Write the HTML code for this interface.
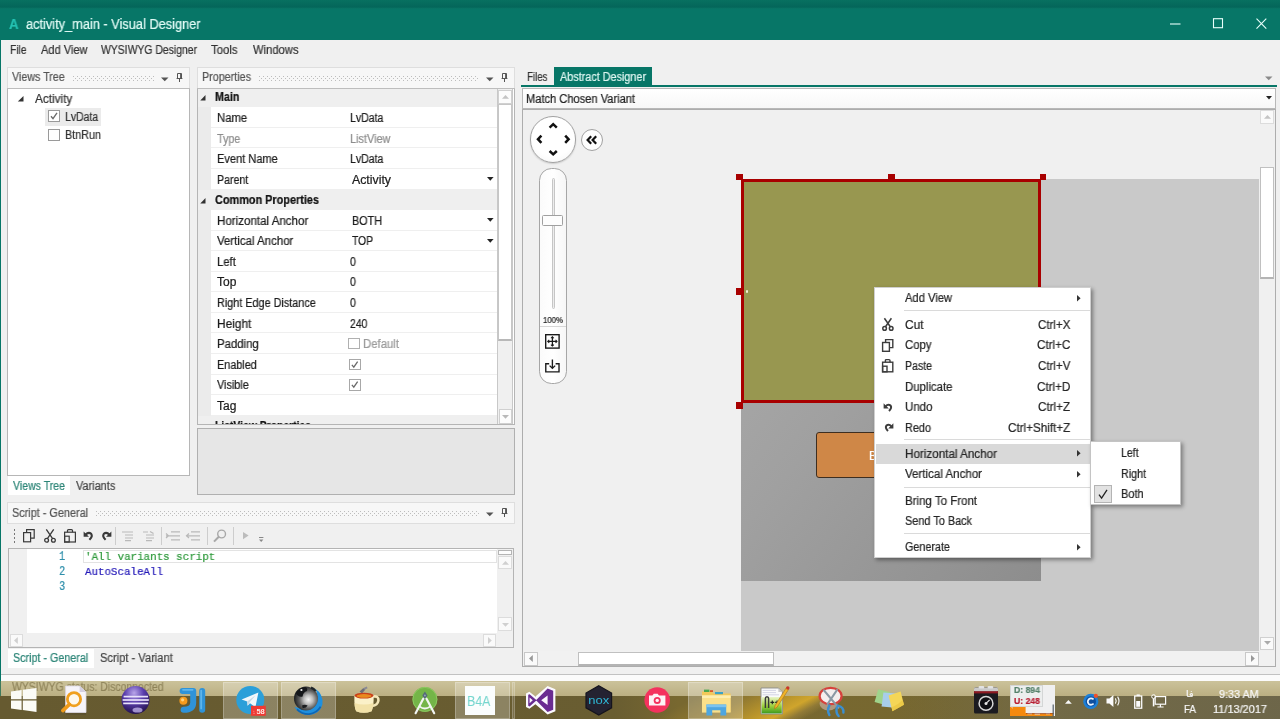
<!DOCTYPE html>
<html><head><meta charset="utf-8"><title>activity_main - Visual Designer</title>
<style>
*{box-sizing:border-box;margin:0;padding:0}
html,body{width:1280px;height:719px;overflow:hidden;background:#f0f0f0;font-family:"Liberation Sans",sans-serif;font-size:12px;color:#2a2a2a}
.abs{position:absolute}
#root{position:relative;width:1280px;height:719px;overflow:hidden;background:#f0f0f0}
.t{-webkit-text-stroke:0.22px;will-change:transform;position:absolute;white-space:nowrap;line-height:16px;height:16px;transform-origin:0 50%}
.grip{position:absolute;height:5px;background-image:radial-gradient(circle at 0.5px 0.5px,#bdbdbd 0.6px,transparent 0.8px),radial-gradient(circle at 2.5px 2.5px,#bdbdbd 0.6px,transparent 0.8px);background-size:4px 4px}
svg{overflow:visible}
.m{font-family:"Liberation Mono",monospace}

</style></head><body><div id="root">
<div class="abs" style="left:0px;top:0px;width:1280px;height:40px;background:#077667;"></div>
<div class="abs" style="left:0px;top:0px;width:1280px;height:9px;background:linear-gradient(#087060,#04665a 78%,#0a7868);"></div>
<div class="t" id="t1" style="left:9.00px;top:16.15px;font-size:14px;color:#25c2b3;font-weight:bold;transform:scaleX(0.9383);">A</div>
<div class="t" id="t2" style="left:25.50px;top:16.35px;font-size:14px;color:#e2fbf6;transform:scaleX(0.9129);">activity_main - Visual Designer</div>
<svg class="abs" style="left:1160px;top:10px;" width="120" height="28" viewBox="0 0 120 28"><g stroke="#e8fffb" stroke-width="1.1" fill="none"><path d="M10 14H20.5"/><rect x="53.5" y="8.7" width="9" height="9"/><path d="M96.5 8.7L106.3 18.7M106.3 8.7L96.5 18.7"/></g></svg>
<div class="abs" style="left:0px;top:40px;width:1px;height:656px;background:#077667;"></div>
<div class="t" id="t3" style="left:9.50px;top:42.14px;font-size:12px;color:#333;transform:scaleX(0.8530);">File</div>
<div class="t" id="t4" style="left:40.50px;top:42.14px;font-size:12px;color:#333;transform:scaleX(0.9211);">Add View</div>
<div class="t" id="t5" style="left:101.00px;top:42.14px;font-size:12px;color:#333;transform:scaleX(0.8672);">WYSIWYG Designer</div>
<div class="t" id="t6" style="left:211.00px;top:42.14px;font-size:12px;color:#333;transform:scaleX(0.9459);">Tools</div>
<div class="t" id="t7" style="left:252.50px;top:42.14px;font-size:12px;color:#333;transform:scaleX(0.9345);">Windows</div>
<div class="abs" style="left:7px;top:67px;width:183px;height:21px;background:#f7f7f7;border:1px solid #dedede;border-bottom:none;"></div>
<div class="abs" style="left:7px;top:88px;width:183px;height:1px;background:#bdbdbd;"></div>
<div class="t" id="t8" style="left:11.70px;top:69.44px;font-size:12px;color:#555;transform:scaleX(0.8911);">Views Tree</div>
<div class="grip" style="left:72.6px;top:75.5px;width:81.4px"></div>
<svg class="abs" style="left:161px;top:77px;" width="8" height="5" viewBox="0 0 8 5"><path d="M0 0.5H7.5L3.75 4.3Z" fill="#555"/></svg>
<svg class="abs" style="left:176px;top:73px;" width="8" height="10" viewBox="0 0 8 10"><g stroke="#555" fill="none" stroke-width="1"><path d="M1.5 0.5H5.5V5.5H1.5ZM4.6 0.5V5.5M0.6 5.5H6.4M3.5 5.5V9"/></g></svg>
<div class="abs" style="left:7px;top:89px;width:183px;height:387px;background:#fff;border:1px solid #b6b6b6;border-top:none;"></div>
<svg class="abs" style="left:16.5px;top:96px;" width="7" height="6" viewBox="0 0 7 6"><path d="M6.5 0V5.5H0.8Z" fill="#333"/></svg>
<div class="t" id="t9" style="left:34.70px;top:90.84px;font-size:12px;color:#333;transform:scaleX(0.9812);">Activity</div>
<div class="abs" style="left:45px;top:107.5px;width:56px;height:18px;background:#ebebeb;"></div>
<div class="abs" style="left:48px;top:110px;width:12px;height:12px;background:#fff;border:1px solid #9a9a9a;"></div>
<svg class="abs" style="left:48px;top:110px;" width="12" height="12" viewBox="0 0 12 12"><path d="M3 6.2L5 8.6L9 2.8" stroke="#6a6a6a" stroke-width="1.35" fill="none"/></svg>
<div class="t" id="t10" style="left:64.80px;top:108.64px;font-size:12px;color:#333;transform:scaleX(0.8730);">LvData</div>
<div class="abs" style="left:48px;top:128.5px;width:12px;height:12px;background:#fff;border:1px solid #9a9a9a;"></div>
<div class="t" id="t11" style="left:64.80px;top:127.04px;font-size:12px;color:#333;transform:scaleX(0.8993);">BtnRun</div>
<div class="abs" style="left:8px;top:476px;width:62px;height:19px;background:#fff;"></div>
<div class="t" id="t12" style="left:12.50px;top:477.64px;font-size:12px;color:#2c8577;transform:scaleX(0.8776);">Views Tree</div>
<div class="t" id="t13" style="left:76.00px;top:477.64px;font-size:12px;color:#444;transform:scaleX(0.9110);">Variants</div>
<div class="abs" style="left:197px;top:67px;width:318px;height:21px;background:#f7f7f7;border:1px solid #dedede;border-bottom:none;"></div>
<div class="abs" style="left:197px;top:88px;width:318px;height:1px;background:#bdbdbd;"></div>
<div class="t" id="t14" style="left:201.70px;top:69.44px;font-size:12px;color:#555;transform:scaleX(0.8957);">Properties</div>
<div class="grip" style="left:258.8px;top:75.5px;width:220.2px"></div>
<svg class="abs" style="left:486px;top:77px;" width="8" height="5" viewBox="0 0 8 5"><path d="M0 0.5H7.5L3.75 4.3Z" fill="#555"/></svg>
<svg class="abs" style="left:501px;top:73px;" width="8" height="10" viewBox="0 0 8 10"><g stroke="#555" fill="none" stroke-width="1"><path d="M1.5 0.5H5.5V5.5H1.5ZM4.6 0.5V5.5M0.6 5.5H6.4M3.5 5.5V9"/></g></svg>
<div class="abs" style="left:197px;top:89px;width:318px;height:336px;background:#fff;border:1px solid #b5b5b5;border-top:none;"></div>
<div class="abs" style="left:198px;top:89px;width:13px;height:335px;background:#ebebeb;"></div>
<div class="abs" style="left:198px;top:89px;width:299px;height:18.26px;background:#efefef;"></div>
<svg class="abs" style="left:200.3px;top:95.3px;" width="6" height="6" viewBox="0 0 6 6"><path d="M5.5 0V5.5H0.3Z" fill="#333"/></svg>
<div class="t" id="t15" style="left:215.00px;top:89.44px;font-size:12px;color:#111;font-weight:bold;clip-path:inset(0 0 0px 0);transform:scaleX(0.8923);">Main</div>
<div class="abs" style="left:211px;top:126.82px;width:286px;height:1px;background:#efefef;"></div>
<div class="t" id="t16" style="left:217.20px;top:110.00px;font-size:12px;color:#1c1c1c;transform:scaleX(0.9433);">Name</div>
<div class="t" id="t17" style="left:349.60px;top:110.00px;font-size:12px;color:#1c1c1c;transform:scaleX(0.8782);">LvData</div>
<div class="abs" style="left:211px;top:147.38px;width:286px;height:1px;background:#efefef;"></div>
<div class="t" id="t18" style="left:217.20px;top:130.56px;font-size:12px;color:#8e8e8e;transform:scaleX(0.8956);">Type</div>
<div class="t" id="t19" style="left:349.60px;top:130.56px;font-size:12px;color:#8e8e8e;transform:scaleX(0.9085);">ListView</div>
<div class="abs" style="left:211px;top:167.94px;width:286px;height:1px;background:#efefef;"></div>
<div class="t" id="t20" style="left:217.20px;top:151.12px;font-size:12px;color:#1c1c1c;transform:scaleX(0.9208);">Event Name</div>
<div class="t" id="t21" style="left:349.60px;top:151.12px;font-size:12px;color:#1c1c1c;transform:scaleX(0.8782);">LvData</div>
<div class="abs" style="left:211px;top:188.5px;width:286px;height:1px;background:#efefef;"></div>
<div class="t" id="t22" style="left:217.20px;top:171.68px;font-size:12px;color:#1c1c1c;transform:scaleX(0.8852);">Parent</div>
<div class="t" id="t23" style="left:351.50px;top:171.68px;font-size:12px;color:#1c1c1c;transform:scaleX(1.0259);">Activity</div>
<svg class="abs" style="left:486.5px;top:177.24px;" width="7" height="4" viewBox="0 0 7 4"><path d="M0 0H6.6L3.3 3.8Z" fill="#222"/></svg>
<div class="abs" style="left:198px;top:189.5px;width:299px;height:20.56px;background:#efefef;"></div>
<svg class="abs" style="left:200.3px;top:198.1px;" width="6" height="6" viewBox="0 0 6 6"><path d="M5.5 0V5.5H0.3Z" fill="#333"/></svg>
<div class="t" id="t24" style="left:215.00px;top:192.24px;font-size:12px;color:#111;font-weight:bold;clip-path:inset(0 0 0px 0);transform:scaleX(0.9068);">Common Properties</div>
<div class="abs" style="left:211px;top:229.62px;width:286px;height:1px;background:#efefef;"></div>
<div class="t" id="t25" style="left:217.20px;top:212.80px;font-size:12px;color:#1c1c1c;transform:scaleX(0.9639);">Horizontal Anchor</div>
<div class="t" id="t26" style="left:351.50px;top:212.80px;font-size:12px;color:#1c1c1c;transform:scaleX(0.8997);">BOTH</div>
<svg class="abs" style="left:486.5px;top:218.36px;" width="7" height="4" viewBox="0 0 7 4"><path d="M0 0H6.6L3.3 3.8Z" fill="#222"/></svg>
<div class="abs" style="left:211px;top:250.18px;width:286px;height:1px;background:#efefef;"></div>
<div class="t" id="t27" style="left:217.20px;top:233.36px;font-size:12px;color:#1c1c1c;transform:scaleX(0.9532);">Vertical Anchor</div>
<div class="t" id="t28" style="left:351.50px;top:233.36px;font-size:12px;color:#1c1c1c;transform:scaleX(0.8588);">TOP</div>
<svg class="abs" style="left:486.5px;top:238.92px;" width="7" height="4" viewBox="0 0 7 4"><path d="M0 0H6.6L3.3 3.8Z" fill="#222"/></svg>
<div class="abs" style="left:211px;top:270.74px;width:286px;height:1px;background:#efefef;"></div>
<div class="t" id="t29" style="left:217.20px;top:253.92px;font-size:12px;color:#1c1c1c;transform:scaleX(0.9393);">Left</div>
<div class="t" id="t30" style="left:349.60px;top:253.92px;font-size:12px;color:#1c1c1c;transform:scaleX(0.8822);">0</div>
<div class="abs" style="left:211px;top:291.3px;width:286px;height:1px;background:#efefef;"></div>
<div class="t" id="t31" style="left:217.20px;top:274.48px;font-size:12px;color:#1c1c1c;transform:scaleX(0.9969);">Top</div>
<div class="t" id="t32" style="left:349.60px;top:274.48px;font-size:12px;color:#1c1c1c;transform:scaleX(0.8822);">0</div>
<div class="abs" style="left:211px;top:311.86px;width:286px;height:1px;background:#efefef;"></div>
<div class="t" id="t33" style="left:217.20px;top:295.04px;font-size:12px;color:#1c1c1c;transform:scaleX(0.9031);">Right Edge Distance</div>
<div class="t" id="t34" style="left:349.60px;top:295.04px;font-size:12px;color:#1c1c1c;transform:scaleX(0.8822);">0</div>
<div class="abs" style="left:211px;top:332.42px;width:286px;height:1px;background:#efefef;"></div>
<div class="t" id="t35" style="left:217.20px;top:315.60px;font-size:12px;color:#1c1c1c;transform:scaleX(0.9888);">Height</div>
<div class="t" id="t36" style="left:349.60px;top:315.60px;font-size:12px;color:#1c1c1c;transform:scaleX(0.8686);">240</div>
<div class="abs" style="left:211px;top:352.98px;width:286px;height:1px;background:#efefef;"></div>
<div class="t" id="t37" style="left:217.20px;top:336.16px;font-size:12px;color:#1c1c1c;transform:scaleX(0.9490);">Padding</div>
<div class="abs" style="left:348px;top:337.92px;width:11.5px;height:11.5px;background:#fff;border:1px solid #b0b0b0;"></div>
<div class="t" id="t38" style="left:362.50px;top:336.16px;font-size:12px;color:#9a9a9a;transform:scaleX(0.9466);">Default</div>
<div class="abs" style="left:211px;top:373.54px;width:286px;height:1px;background:#efefef;"></div>
<div class="t" id="t39" style="left:217.20px;top:356.72px;font-size:12px;color:#1c1c1c;transform:scaleX(0.9036);">Enabled</div>
<div class="abs" style="left:349px;top:358.78px;width:11.5px;height:11.5px;background:#fff;border:1px solid #a8a8a8;"></div>
<svg class="abs" style="left:349px;top:358.78px;" width="11.5" height="11.5" viewBox="0 0 12 12"><path d="M3 6.2L5 8.6L9 2.8" stroke="#6a6a6a" stroke-width="1.35" fill="none"/></svg>
<div class="abs" style="left:211px;top:394.1px;width:286px;height:1px;background:#efefef;"></div>
<div class="t" id="t40" style="left:217.20px;top:377.28px;font-size:12px;color:#1c1c1c;transform:scaleX(0.9049);">Visible</div>
<div class="abs" style="left:349px;top:379.34px;width:11.5px;height:11.5px;background:#fff;border:1px solid #a8a8a8;"></div>
<svg class="abs" style="left:349px;top:379.34px;" width="11.5" height="11.5" viewBox="0 0 12 12"><path d="M3 6.2L5 8.6L9 2.8" stroke="#6a6a6a" stroke-width="1.35" fill="none"/></svg>
<div class="abs" style="left:211px;top:414.66px;width:286px;height:1px;background:#efefef;"></div>
<div class="t" id="t41" style="left:217.20px;top:397.84px;font-size:12px;color:#1c1c1c;transform:scaleX(0.9969);">Tag</div>
<div class="abs" style="left:198px;top:415.66px;width:299px;height:20.56px;background:#efefef;"></div>
<svg class="abs" style="left:202px;top:423.66px;" width="5" height="8" viewBox="0 0 5 8"><path d="M0.5 0.5L4 4L0.5 7.5Z" fill="none" stroke="#555" stroke-width="0.9"/></svg>
<div class="t" id="t42" style="left:215.00px;top:418.40px;font-size:12px;color:#111;font-weight:bold;clip-path:inset(0 0 9.9px 0);transform:scaleX(0.8636);">ListView Properties</div>
<div class="abs" style="left:497px;top:88.5px;width:16px;height:336px;background:#f0f0f0;border:1px solid #c8c8c8;border-top:none;border-bottom:none;"></div>
<div class="abs" style="left:498px;top:90px;width:14px;height:13.5px;background:#fcfcfc;border:1px solid #d0d0d0;"></div>
<svg class="abs" style="left:501.5px;top:94.5px;" width="7" height="4" viewBox="0 0 7 4"><path d="M0 3.8H7L3.5 0Z" fill="#c4c4c4"/></svg>
<div class="abs" style="left:498px;top:104px;width:14px;height:236.5px;background:#fff;border:1px solid #c6c6c6;border-bottom:2px solid #b8b8b8;"></div>
<div class="abs" style="left:499px;top:409px;width:13px;height:14.5px;background:#fcfcfc;border:1px solid #d0d0d0;"></div>
<svg class="abs" style="left:502px;top:414.5px;" width="7" height="4" viewBox="0 0 7 4"><path d="M0 0H7L3.5 3.8Z" fill="#b8b8b8"/></svg>
<div class="abs" style="left:197px;top:424.2px;width:318px;height:4.5px;background:#f0f0f0;border-top:1px solid #b5b5b5;"></div>
<div class="abs" style="left:197px;top:428px;width:318px;height:67px;background:#e6e6e6;border:1px solid #b0b0b0;"></div>
<div class="abs" style="left:7px;top:502px;width:508px;height:21px;background:#f7f7f7;border:1px solid #dedede;border-bottom:none;"></div>
<div class="abs" style="left:7px;top:523px;width:508px;height:1px;background:#dedede;"></div>
<div class="t" id="t43" style="left:11.70px;top:505.34px;font-size:12px;color:#555;transform:scaleX(0.9056);">Script - General</div>
<div class="grip" style="left:96px;top:510.5px;width:383px"></div>
<svg class="abs" style="left:486px;top:512px;" width="8" height="5" viewBox="0 0 8 5"><path d="M0 0.5H7.5L3.75 4.3Z" fill="#555"/></svg>
<svg class="abs" style="left:501px;top:508px;" width="8" height="10" viewBox="0 0 8 10"><g stroke="#555" fill="none" stroke-width="1"><path d="M1.5 0.5H5.5V5.5H1.5ZM4.6 0.5V5.5M0.6 5.5H6.4M3.5 5.5V9"/></g></svg>
<div class="abs" style="left:13.5px;top:529px;width:1.5px;height:1.5px;background:#777;"></div>
<div class="abs" style="left:13.5px;top:533px;width:1.5px;height:1.5px;background:#777;"></div>
<div class="abs" style="left:13.5px;top:537px;width:1.5px;height:1.5px;background:#777;"></div>
<div class="abs" style="left:13.5px;top:541px;width:1.5px;height:1.5px;background:#777;"></div>
<svg class="abs" style="left:23px;top:528.5px;" width="12" height="14" viewBox="0 0 12 14"><g fill="none" stroke="#3a3a3a" stroke-width="1.2"><path d="M3.6 3.5V0.6H11.2V9.2H7.6"/><rect x="0.6" y="3.6" width="7" height="9.2" fill="#f0f0f0"/></g></svg>
<svg class="abs" style="left:43.5px;top:528.5px;" width="12" height="14" viewBox="0 0 12 14"><g fill="none" stroke="#3a3a3a" stroke-width="1.3"><path d="M2.3 0.3L8.6 9.6M9.7 0.3L3.4 9.6"/><circle cx="2.6" cy="11.2" r="1.9"/><circle cx="9.4" cy="11.2" r="1.9"/></g></svg>
<svg class="abs" style="left:63.5px;top:528.5px;" width="12" height="14" viewBox="0 0 12 14"><g fill="none" stroke="#3a3a3a" stroke-width="1.2"><path d="M3.5 3.2V1.6Q3.5 0.6 4.5 0.6H7.5Q8.5 0.6 8.5 1.6V3.2"/><rect x="0.6" y="3.2" width="10.8" height="9.8"/><rect x="0.6" y="7.2" width="4.6" height="5.8"/></g></svg>
<svg class="abs" style="left:84px;top:531px;" width="10" height="10" viewBox="0 0 10 10"><g fill="none" stroke="#3a3a3a" stroke-width="2.1"><path d="M1.4 3.8Q4.5 0.6 7.2 2.8Q9 5.2 5.4 8.8"/></g><path d="M-0.4 0.4V5.8H5Z" fill="#3a3a3a"/></svg>
<svg class="abs" style="left:101px;top:531px;" width="10" height="10" viewBox="0 0 10 10"><g transform="translate(10,0) scale(-1,1)"><g fill="none" stroke="#3a3a3a" stroke-width="2.1"><path d="M1.4 3.8Q4.5 0.6 7.2 2.8Q9 5.2 5.4 8.8"/></g><path d="M-0.4 0.4V5.8H5Z" fill="#3a3a3a"/></g></svg>
<div class="abs" style="left:114.5px;top:526.5px;width:1px;height:18px;background:#cdcdcd;"></div>
<svg class="abs" style="left:122px;top:531px;" width="12" height="10" viewBox="0 0 12 10"><g stroke="#b9b9b9" stroke-width="1.2"><path d="M0 1H11M3 4H11M3 7H11M3 9.6H9"/></g></svg>
<svg class="abs" style="left:143px;top:531px;" width="12" height="10" viewBox="0 0 12 10"><g stroke="#b9b9b9" stroke-width="1.2"><path d="M0 1H5M3 4H11M3 7H11M3 9.6H9"/><path d="M7 0.5L10.5 2.5" /></g></svg>
<div class="abs" style="left:160.5px;top:526.5px;width:1px;height:18px;background:#cdcdcd;"></div>
<svg class="abs" style="left:166px;top:531px;" width="15" height="10" viewBox="0 0 15 10"><g stroke="#b9b9b9" stroke-width="1.2" fill="none"><path d="M5 0.8H14M0 4.8H14M5 8.8H14M0 2.5L2.5 4.8L0 7"/></g></svg>
<svg class="abs" style="left:186px;top:531px;" width="15" height="10" viewBox="0 0 15 10"><g stroke="#b9b9b9" stroke-width="1.2" fill="none"><path d="M5 0.8H14M0 4.8H14M5 8.8H14M3 2.5L0.5 4.8L3 7"/></g></svg>
<div class="abs" style="left:207px;top:526.5px;width:1px;height:18px;background:#cdcdcd;"></div>
<svg class="abs" style="left:213px;top:529px;" width="14" height="14" viewBox="0 0 14 14"><g stroke="#a8a8a8" fill="none"><circle cx="8.6" cy="5" r="3.9" stroke-width="1.4"/><path d="M5.8 7.8L1 12.6" stroke-width="2"/></g></svg>
<div class="abs" style="left:232.5px;top:526.5px;width:1px;height:18px;background:#cdcdcd;"></div>
<svg class="abs" style="left:242.5px;top:532px;" width="6" height="8" viewBox="0 0 6 8"><path d="M0 0L5.6 3.6L0 7.2Z" fill="#bcbcbc"/></svg>
<svg class="abs" style="left:259px;top:537px;" width="5" height="6" viewBox="0 0 5 6"><path d="M0 0.5H4.4" stroke="#888" stroke-width="1"/><path d="M0 2.6H4.4L2.2 5Z" fill="#888"/></svg>
<div class="abs" style="left:8px;top:548px;width:506px;height:100px;background:#fff;border:1px solid #b4b4b4;"></div>
<div class="abs" style="left:9px;top:549px;width:17.5px;height:84px;background:#f0f0f0;"></div>
<div class="abs" style="left:9px;top:632.5px;width:504px;height:14.5px;background:#f0f0f0;"></div>
<div class="abs" style="left:497px;top:549px;width:16px;height:84px;background:#f0f0f0;"></div>
<div class="abs" style="left:83px;top:549.8px;width:414px;height:13.4px;border:1px solid #e3e3e3;"></div>
<div class="t m" id="t44" style="left:58.60px;top:548.87px;font-size:12.5px;color:#2f8fab;transform:scaleX(0.8249);">1</div>
<div class="t m" id="t45" style="left:58.60px;top:563.67px;font-size:12.5px;color:#2f8fab;transform:scaleX(0.8249);">2</div>
<div class="t m" id="t46" style="left:58.60px;top:578.67px;font-size:12.5px;color:#2f8fab;transform:scaleX(0.8249);">3</div>
<div class="t m" id="t47" style="left:84.70px;top:548.74px;font-size:11.5px;color:#2f9a3c;transform:scaleX(0.9440);">'All variants script</div>
<div class="t m" id="t48" style="left:84.70px;top:563.54px;font-size:11.5px;color:#2318b8;transform:scaleX(0.9417);">AutoScaleAll</div>
<div class="abs" style="left:498px;top:549.5px;width:14px;height:5px;background:#fdfdfd;border:1px solid #b5b5b5;"></div>
<div class="abs" style="left:498px;top:556px;width:14px;height:13px;background:#fafafa;border:1px solid #dcdcdc;"></div>
<svg class="abs" style="left:501.5px;top:560.5px;" width="7" height="4" viewBox="0 0 7 4"><path d="M0 3.8H7L3.5 0Z" fill="#d0d0d0"/></svg>
<div class="abs" style="left:498px;top:617px;width:14px;height:14px;background:#fafafa;border:1px solid #dcdcdc;"></div>
<svg class="abs" style="left:501.5px;top:622.5px;" width="7" height="4" viewBox="0 0 7 4"><path d="M0 0H7L3.5 3.8Z" fill="#d0d0d0"/></svg>
<div class="abs" style="left:9.5px;top:633.5px;width:13px;height:13px;background:#fafafa;border:1px solid #dcdcdc;"></div>
<svg class="abs" style="left:14px;top:636.5px;" width="4" height="7" viewBox="0 0 4 7"><path d="M3.8 0V7L0 3.5Z" fill="#d0d0d0"/></svg>
<div class="abs" style="left:482.5px;top:633.5px;width:13px;height:13px;background:#fafafa;border:1px solid #dcdcdc;"></div>
<svg class="abs" style="left:487.5px;top:636.5px;" width="4" height="7" viewBox="0 0 4 7"><path d="M0 0V7L3.8 3.5Z" fill="#d0d0d0"/></svg>
<div class="abs" style="left:8px;top:648.5px;width:85.5px;height:19px;background:#fff;"></div>
<div class="t" id="t49" style="left:12.50px;top:649.64px;font-size:12px;color:#2c8577;transform:scaleX(0.8949);">Script - General</div>
<div class="t" id="t50" style="left:99.70px;top:649.64px;font-size:12px;color:#444;transform:scaleX(0.9265);">Script - Variant</div>
<div class="t" id="t51" style="left:527.00px;top:68.94px;font-size:12px;color:#333;transform:scaleX(0.8089);">Files</div>
<div class="abs" style="left:553.8px;top:66.5px;width:98px;height:19px;background:#077667;"></div>
<div class="t" id="t52" style="left:560.00px;top:68.94px;font-size:12px;color:#dff7f2;transform:scaleX(0.9017);">Abstract Designer</div>
<div class="abs" style="left:521px;top:85px;width:756px;height:2px;background:#077667;"></div>
<svg class="abs" style="left:1265px;top:75.5px;" width="8" height="5" viewBox="0 0 8 5"><path d="M0 0.5H7.5L3.75 4.3Z" fill="#8a8a8a"/></svg>
<div class="abs" style="left:521.5px;top:88px;width:754.8px;height:20.5px;background:linear-gradient(#ffffff,#f7f7f7);border:1px solid #b8b8b8;"></div>
<div class="t" id="t53" style="left:526.00px;top:90.54px;font-size:12px;color:#222;transform:scaleX(0.9250);">Match Chosen Variant</div>
<svg class="abs" style="left:1266.3px;top:96px;" width="6" height="4" viewBox="0 0 6 4"><path d="M0 0H6L3 3.4Z" fill="#222"/></svg>
<div class="abs" style="left:521.5px;top:108.5px;width:754.8px;height:558.8px;background:#f0f0f0;border:1px solid #adadad;"></div>
<div class="abs" style="left:741px;top:179px;width:518px;height:471.5px;background:#c9c9c9;"></div>
<div class="abs" style="left:741px;top:179px;width:300px;height:402px;background:linear-gradient(128deg,#adadad 0%,#a0a0a0 45%,#8d8d8d 100%);"></div>
<div class="abs" style="left:816px;top:431.5px;width:150px;height:46.5px;background:#cf8747;border:1.3px solid #3e2e20;border-radius:3px;"></div>
<div class="t" id="t54" style="left:868.70px;top:448.34px;font-size:12px;color:#fff;">BtnRun</div>
<div class="abs" style="left:741px;top:179px;width:300px;height:223.5px;background:#989750;border:3px solid #a80000;"></div>
<div class="abs" style="left:736px;top:173.6px;width:6.8px;height:6.8px;background:#a80000;"></div>
<div class="abs" style="left:887.8px;top:173.6px;width:6.8px;height:6.8px;background:#a80000;"></div>
<div class="abs" style="left:1039.7px;top:173.6px;width:6.8px;height:6.8px;background:#a80000;"></div>
<div class="abs" style="left:736px;top:288px;width:6.8px;height:6.8px;background:#a80000;"></div>
<div class="abs" style="left:736px;top:401.8px;width:6.8px;height:6.8px;background:#a80000;"></div>
<div class="abs" style="left:745.5px;top:290px;width:2.5px;height:2.5px;background:#f4f0d8;border-radius:50%;"></div>
<div class="abs" style="left:1259px;top:109.5px;width:16.3px;height:541px;background:#f0f0f0;"></div>
<div class="abs" style="left:1260.3px;top:110px;width:14px;height:13.5px;background:#fafafa;border:1px solid #dcdcdc;"></div>
<svg class="abs" style="left:1263.8px;top:114.8px;" width="7" height="4" viewBox="0 0 7 4"><path d="M0 3.8H7L3.5 0Z" fill="#c4c4c4"/></svg>
<div class="abs" style="left:1260.3px;top:167.3px;width:14px;height:112px;background:#fff;border:1px solid #c0c0c0;border-bottom:2px solid #b4b4b4;"></div>
<div class="abs" style="left:1260.3px;top:636.5px;width:14px;height:13.5px;background:#fafafa;border:1px solid #d0d0d0;"></div>
<svg class="abs" style="left:1263.8px;top:641.3px;" width="7" height="4" viewBox="0 0 7 4"><path d="M0 0H7L3.5 3.8Z" fill="#aaa"/></svg>
<div class="abs" style="left:522.5px;top:650.5px;width:752.8px;height:15.8px;background:#f1f1f1;"></div>
<div class="abs" style="left:524px;top:652px;width:14px;height:13.5px;background:#fafafa;border:1px solid #c8c8c8;"></div>
<svg class="abs" style="left:529px;top:655.3px;" width="4" height="7" viewBox="0 0 4 7"><path d="M3.8 0V7L0 3.5Z" fill="#999"/></svg>
<div class="abs" style="left:578px;top:652px;width:195.5px;height:13.5px;background:#fff;border:1px solid #c0c0c0;border-bottom:2px solid #b4b4b4;"></div>
<div class="abs" style="left:1245px;top:652px;width:14px;height:13.5px;background:#fafafa;border:1px solid #c8c8c8;"></div>
<svg class="abs" style="left:1250.5px;top:655.3px;" width="4" height="7" viewBox="0 0 4 7"><path d="M0 0V7L3.8 3.5Z" fill="#999"/></svg>
<div class="abs" style="left:529.5px;top:116px;width:46.5px;height:46.5px;background:radial-gradient(circle at 50% 40%,#ffffff 60%,#f2f2f2);border:1.7px solid #a2a2a2;border-radius:50%;box-shadow:0 1px 1.5px rgba(0,0,0,.15);"></div>
<svg class="abs" style="left:529.5px;top:116px;" width="46.5" height="46.5" viewBox="0 0 46.5 46.5"><g fill="none" stroke="#111" stroke-width="2.5" stroke-linecap="butt"><path d="M19.6 11.6L23.2 8.2L26.8 11.6"/><path d="M19.6 35L23.2 38.4L26.8 35"/><path d="M11.4 19.6L8 23.2L11.4 26.8"/><path d="M35.2 19.6L38.6 23.2L35.2 26.8"/></g></svg>
<div class="abs" style="left:581px;top:129px;width:22px;height:22px;background:#fdfdfd;border:1.6px solid #a2a2a2;border-radius:50%;"></div>
<svg class="abs" style="left:581px;top:129px;" width="22" height="22" viewBox="0 0 22 22"><g fill="none" stroke="#111" stroke-width="2.2"><path d="M10.2 7.2L6.6 11L10.2 14.8"/><path d="M15.2 7.2L11.6 11L15.2 14.8"/></g></svg>
<div class="abs" style="left:539px;top:167.5px;width:28px;height:216.5px;background:linear-gradient(90deg,#fbfbfb,#ffffff 50%,#f6f6f6);border:1.2px solid #a6a6a6;border-radius:12.5px;"></div>
<div class="abs" style="left:551.5px;top:178px;width:3.5px;height:130.5px;background:#ededed;border:1px solid #c6c6c6;border-radius:2px;"></div>
<div class="abs" style="left:542px;top:215.4px;width:21px;height:10.6px;background:#fdfdfd;border:1px solid #a0a0a0;border-radius:1.5px;"></div>
<div class="t" id="t55" style="left:542.70px;top:312.08px;font-size:9px;color:#222;transform:scaleX(0.8684);">100%</div>
<div class="abs" style="left:540px;top:325.5px;width:26px;height:1px;background:#d6d6d6;"></div>
<svg class="abs" style="left:545px;top:334.3px;" width="14.8" height="14.8" viewBox="0 0 16 16"><g fill="none" stroke="#1a1a1a"><rect x="0.75" y="0.75" width="14.5" height="14.5" stroke-width="1.5"/><path d="M8 3V13M3 8H13" stroke-width="1.4"/><path d="M6.4 4.6L8 3L9.6 4.6M6.4 11.4L8 13L9.6 11.4M4.6 6.4L3 8L4.6 9.6M11.4 6.4L13 8L11.4 9.6" stroke-width="1.1"/></g></svg>
<svg class="abs" style="left:545px;top:359.3px;" width="14.8" height="13.8" viewBox="0 0 16 15"><g fill="none" stroke="#1a1a1a" stroke-width="1.5"><path d="M4.5 5.2H0.8V14H15.2V5.2H11.5"/><path d="M8 0.5V10M5 7.2L8 10.2L11 7.2"/></g></svg>
<div class="abs" style="left:873.8px;top:286.5px;width:217.7px;height:271.5px;background:#fff;border:1px solid #cfcfcf;box-shadow:2px 2px 4px rgba(0,0,0,.4);"></div>
<div class="abs" style="left:875.5px;top:443.5px;width:215px;height:20px;background:#d9d9d9;"></div>
<div class="t" id="t56" style="left:905.00px;top:290.34px;font-size:12px;color:#262626;transform:scaleX(0.9310);">Add View</div>
<svg class="abs" style="left:1077.3px;top:295px;" width="4" height="7" viewBox="0 0 4 7"><path d="M0 0V6.4L3.6 3.2Z" fill="#333"/></svg>
<div class="t" id="t57" style="left:905.00px;top:316.54px;font-size:12px;color:#262626;transform:scaleX(0.9900);">Cut</div>
<div class="t" id="t58" style="left:1037.50px;top:316.54px;font-size:12px;color:#262626;transform:scaleX(0.9588);">Ctrl+X</div>
<div class="t" id="t59" style="left:905.00px;top:337.14px;font-size:12px;color:#262626;transform:scaleX(0.9459);">Copy</div>
<div class="t" id="t60" style="left:1036.50px;top:337.14px;font-size:12px;color:#262626;transform:scaleX(0.9696);">Ctrl+C</div>
<div class="t" id="t61" style="left:905.00px;top:357.94px;font-size:12px;color:#262626;transform:scaleX(0.8798);">Paste</div>
<div class="t" id="t62" style="left:1037.50px;top:357.94px;font-size:12px;color:#262626;transform:scaleX(0.9588);">Ctrl+V</div>
<div class="t" id="t63" style="left:905.00px;top:378.64px;font-size:12px;color:#262626;transform:scaleX(0.9494);">Duplicate</div>
<div class="t" id="t64" style="left:1036.50px;top:378.64px;font-size:12px;color:#262626;transform:scaleX(0.9696);">Ctrl+D</div>
<div class="t" id="t65" style="left:905.00px;top:399.14px;font-size:12px;color:#262626;transform:scaleX(0.9586);">Undo</div>
<div class="t" id="t66" style="left:1037.80px;top:399.14px;font-size:12px;color:#262626;transform:scaleX(0.9697);">Ctrl+Z</div>
<div class="t" id="t67" style="left:905.00px;top:419.74px;font-size:12px;color:#262626;transform:scaleX(0.9063);">Redo</div>
<div class="t" id="t68" style="left:1007.60px;top:419.74px;font-size:12px;color:#262626;transform:scaleX(0.9714);">Ctrl+Shift+Z</div>
<div class="t" id="t69" style="left:905.00px;top:445.74px;font-size:12px;color:#262626;transform:scaleX(0.9713);">Horizontal Anchor</div>
<svg class="abs" style="left:1077.3px;top:450.4px;" width="4" height="7" viewBox="0 0 4 7"><path d="M0 0V6.4L3.6 3.2Z" fill="#333"/></svg>
<div class="t" id="t70" style="left:905.00px;top:466.44px;font-size:12px;color:#262626;transform:scaleX(0.9619);">Vertical Anchor</div>
<svg class="abs" style="left:1077.3px;top:471.1px;" width="4" height="7" viewBox="0 0 4 7"><path d="M0 0V6.4L3.6 3.2Z" fill="#333"/></svg>
<div class="t" id="t71" style="left:905.00px;top:492.74px;font-size:12px;color:#262626;transform:scaleX(0.9580);">Bring To Front</div>
<div class="t" id="t72" style="left:905.00px;top:513.34px;font-size:12px;color:#262626;transform:scaleX(0.9075);">Send To Back</div>
<div class="t" id="t73" style="left:905.00px;top:539.34px;font-size:12px;color:#262626;transform:scaleX(0.8992);">Generate</div>
<svg class="abs" style="left:1077.3px;top:544px;" width="4" height="7" viewBox="0 0 4 7"><path d="M0 0V6.4L3.6 3.2Z" fill="#333"/></svg>
<div class="abs" style="left:903.8px;top:310.2px;width:186.7px;height:1px;background:#dadada;"></div>
<div class="abs" style="left:903.8px;top:439px;width:186.7px;height:1px;background:#dadada;"></div>
<div class="abs" style="left:903.8px;top:486.6px;width:186.7px;height:1px;background:#dadada;"></div>
<div class="abs" style="left:903.8px;top:533px;width:186.7px;height:1px;background:#dadada;"></div>
<svg class="abs" style="left:881.5px;top:318px;" width="12" height="13" viewBox="0 0 12 13"><g fill="none" stroke="#3c3c3c" stroke-width="1.5"><path d="M2.4 0.3L8.3 8.8M9.4 0.3L3.5 8.8"/><circle cx="2.6" cy="10.4" r="1.8"/><circle cx="9.2" cy="10.4" r="1.8"/></g></svg>
<svg class="abs" style="left:881.5px;top:338.5px;" width="12" height="13" viewBox="0 0 12 13"><g fill="none" stroke="#3c3c3c" stroke-width="1.4"><path d="M3.6 3.4V0.6H10.8V8.6H7.4"/><rect x="0.6" y="3.5" width="6.8" height="8.8" fill="#fff"/></g></svg>
<svg class="abs" style="left:881.5px;top:358.5px;" width="12" height="14" viewBox="0 0 12 14"><g fill="none" stroke="#3c3c3c" stroke-width="1.4"><path d="M3.4 3.2V1.6Q3.4 0.6 4.4 0.6H7Q8 0.6 8 1.6V3.2"/><rect x="0.6" y="3.2" width="10.2" height="9.6"/><rect x="0.6" y="7.2" width="4.4" height="5.6"/></g></svg>
<svg class="abs" style="left:883.5px;top:402.5px;" width="9" height="9" viewBox="0 0 9 9"><g fill="none" stroke="#3c3c3c" stroke-width="2"><path d="M1.4 3.6Q4 0.6 6.6 2.6Q8.2 4.8 5 8"/></g><path d="M-0.4 0.2V5.4H4.8Z" fill="#3c3c3c"/></svg>
<svg class="abs" style="left:883.5px;top:423px;" width="9" height="9" viewBox="0 0 9 9"><g transform="translate(9,0) scale(-1,1)"><g fill="none" stroke="#3c3c3c" stroke-width="2"><path d="M1.4 3.6Q4 0.6 6.6 2.6Q8.2 4.8 5 8"/></g><path d="M-0.4 0.2V5.4H4.8Z" fill="#3c3c3c"/></g></svg>
<div class="abs" style="left:1089.8px;top:440.5px;width:91.6px;height:64.5px;background:#fff;border:1px solid #c4c4c4;box-shadow:2px 2px 4px rgba(0,0,0,.38);"></div>
<div class="t" id="t74" style="left:1121.40px;top:444.84px;font-size:12px;color:#262626;transform:scaleX(0.8793);">Left</div>
<div class="t" id="t75" style="left:1121.40px;top:465.64px;font-size:12px;color:#262626;transform:scaleX(0.8959);">Right</div>
<div class="t" id="t76" style="left:1121.40px;top:486.04px;font-size:12px;color:#262626;transform:scaleX(0.9154);">Both</div>
<div class="abs" style="left:1094px;top:485px;width:18px;height:17.8px;background:#e2e2e2;border:1px solid #b4b4b4;"></div>
<svg class="abs" style="left:1098px;top:488.5px;" width="10" height="11" viewBox="0 0 10 11"><path d="M1 5.6L3.6 9.2L9 0.8" fill="none" stroke="#222" stroke-width="1.3"/></svg>
<div class="abs" style="left:1px;top:674px;width:1279px;height:1px;background:#c2c2c2;"></div>
<div class="abs" style="left:1px;top:675px;width:1279px;height:21px;background:#fbfbfb;"></div>
<div class="abs" style="left:0px;top:695.5px;width:1280px;height:23.5px;background:linear-gradient(90deg,#665a30 0%,#695d31 48%,#786830 53%,#75672f 100%);"></div>
<div class="abs" style="left:600px;top:695.5px;width:400px;height:23.5px;overflow:hidden"><div class="abs" style="left:53px;top:0;width:150px;height:23.5px;transform-origin:0 100%;transform:skewX(-62deg);background:linear-gradient(90deg,rgba(160,132,50,0) 0%,rgba(170,138,48,.5) 35%,rgba(196,156,42,.85) 62%,rgba(212,168,44,.95) 78%,rgba(170,140,60,.5) 90%,rgba(120,108,60,0) 100%)"></div></div>
<div class="abs" style="left:900px;top:695.5px;width:380px;height:23.5px;background:linear-gradient(90deg,rgba(112,106,76,0),rgba(112,106,78,.75) 40%,rgba(108,102,78,.85));"></div>
<div class="abs" style="left:0px;top:681px;width:1280px;height:14.5px;background:linear-gradient(#cbc29a,#bbaf82);"></div>
<div class="abs" style="left:0px;top:681px;width:1px;height:14.5px;background:#3f7a5c;"></div>
<div class="t" id="t77" style="left:11.50px;top:678.64px;font-size:12px;color:rgba(120,108,66,.62);transform:scaleX(0.8704);">WYSIWYG status: Disconnected</div>
<div class="abs" style="left:222.5px;top:681.5px;width:55px;height:37px;background:rgba(255,255,255,.24);border:1px solid rgba(255,255,255,.24);"></div>
<div class="abs" style="left:280.5px;top:681.5px;width:55px;height:37px;background:rgba(255,255,255,.24);border:1px solid rgba(255,255,255,.24);"></div>
<div class="abs" style="left:455px;top:681.5px;width:55px;height:37px;background:rgba(255,255,255,.24);border:1px solid rgba(255,255,255,.24);"></div>
<div class="abs" style="left:687.5px;top:681.5px;width:55px;height:37px;background:rgba(255,255,255,.24);border:1px solid rgba(255,255,255,.24);"></div>
<div class="abs" style="left:511.5px;top:681.5px;width:3px;height:37px;background:rgba(255,255,255,.12);border:1px solid rgba(255,255,255,.2);"></div>
<svg class="abs" style="left:10.5px;top:688px;" width="26" height="24" viewBox="0 0 26 24"><g fill="#fbfbf6"><path d="M0 3.4L10.6 1.9V11.3H0Z"/><path d="M11.8 1.7L25.5 0V11.3H11.8Z"/><path d="M0 12.5H10.6V21.9L0 20.4Z"/><path d="M11.8 12.5H25.5V24L11.8 22.1Z"/></g></svg>
<svg class="abs" style="left:61px;top:685px;" width="26" height="30" viewBox="0 0 26 30"><path d="M4.6 1H18.6L25 7V27.5H4.6Z" fill="#f6f4fa" stroke="#dcd8e4" stroke-width=".8"/><path d="M18.6 1V7H25Z" fill="#d4cfe0"/><circle cx="13" cy="14.2" r="6.6" fill="#fdf8ee" stroke="#f0a020" stroke-width="2.8"/><path d="M8.4 19.4L1.8 25.6" stroke="#ee9a1a" stroke-width="3.6" stroke-linecap="round"/><path d="M5 29H25" stroke="#4a4430" stroke-width="1.2" opacity=".5"/></svg>
<svg class="abs" style="left:120.5px;top:685px;" width="29" height="30" viewBox="0 0 29 30"><defs><radialGradient id="ecl" cx="45%" cy="25%" r="75%"><stop offset="0" stop-color="#b9a6ea"/><stop offset=".45" stop-color="#5b3fae"/><stop offset="1" stop-color="#24124f"/></radialGradient></defs><circle cx="14.5" cy="15" r="14" fill="url(#ecl)"/><path d="M2.6 11.6H27" stroke="#e9e2fb" stroke-width="1.7"/><path d="M1.6 15H27.8" stroke="#e9e2fb" stroke-width="1.7"/><path d="M2.2 18.4H27.2" stroke="#e9e2fb" stroke-width="1.7"/><ellipse cx="16.5" cy="25" rx="5" ry="2.6" fill="#c6b8ef" opacity=".75"/></svg>
<svg class="abs" style="left:178.5px;top:686.5px;" width="28" height="27" viewBox="0 0 28 27"><g fill="none" stroke="#2f93d8" stroke-width="6" stroke-linecap="round" stroke-linejoin="round"><path d="M3.6 3.9H14.2V15.5Q14.2 22.8 4.6 22.8"/><path d="M23.2 3.9V22.8"/></g><g fill="none" stroke="#6fc0f2" stroke-width="1.8" stroke-linecap="round" opacity=".75"><path d="M4 2.8H13.6M22.2 3.6V21.4"/></g><circle cx="4.4" cy="13.8" r="4" fill="#f59a1c"/><circle cx="3.6" cy="12.8" r="1.6" fill="#ffd27a"/></svg>
<svg class="abs" style="left:235.5px;top:685.5px;" width="31" height="31" viewBox="0 0 31 31"><circle cx="14.3" cy="14" r="14" fill="#2b9fd9"/><path d="M5.6 13.6L22.4 6.6L19.4 21.2L14 17.2L11.6 19.8L11.2 15.6Z" fill="#f2f7fb"/><path d="M11.2 15.6L19.6 9.2L13.4 16.6L11.6 19.8Z" fill="#c4d8e6"/><rect x="15" y="19.8" width="14.8" height="10" fill="#ef3a34"/><text x="28.8" y="27.9" font-size="7.5" font-weight="bold" fill="#ffe9e6" text-anchor="end" font-family="Liberation Sans, sans-serif">58</text><path d="M17.5 27.3h1M17.5 25.3h.7" stroke="#ffd0cc" stroke-width=".8"/></svg>
<svg class="abs" style="left:293px;top:684.5px;" width="31" height="31" viewBox="0 0 31 31"><defs><radialGradient id="glb" cx="60%" cy="55%" r="62%"><stop offset="0" stop-color="#f4f4f4"/><stop offset=".3" stop-color="#bdbdbd"/><stop offset=".62" stop-color="#5c5c5c"/><stop offset="1" stop-color="#141618"/></radialGradient></defs><path d="M22 3.4Q30.6 9 29.4 19.4Q27 29 15.4 30Q6 29.6 1.4 22Q8 24 16 22Q23.6 19 24.4 11Q24 6.4 22 3.4Z" fill="#1e90e0"/><path d="M4 24.4Q9 29.4 16 29.2Q24 28 27.6 21.6" fill="none" stroke="#0f66b4" stroke-width="1.8"/><circle cx="13" cy="13.4" r="12" fill="url(#glb)"/><path d="M3 8Q6 3 12 2Q15 2.6 14 6Q10 7 9.6 11.6Q5 12.6 3 8Z" fill="#15171a"/><path d="M9 20.4Q12 18.8 14.6 20.6Q13 23.6 9.6 23Z" fill="#1b1d20"/><circle cx="8.4" cy="5" r="1.1" fill="#f0f0f0"/><path d="M18 2.6Q21 3.6 22.6 6" stroke="#1f2428" stroke-width="2.2" fill="none"/></svg>
<svg class="abs" style="left:352px;top:686px;" width="28" height="29" viewBox="0 0 28 29"><path d="M7.6 5.4L11.4 2L13.4 3.6L10 7.4Z" fill="#6e6e78"/><path d="M11 2.2L14.8 0.6L15.6 2.2L12.6 3.8Z" fill="#8a8a94"/><path d="M20.5 10.5Q27 9.5 26.4 14.6Q25.6 19.4 20 20" fill="none" stroke="#f3e6b8" stroke-width="2.6"/><path d="M2.4 9.6Q2 22 4.2 25.2Q11.8 28.4 19.6 25.2Q22 20 21.6 9.6Z" fill="#fbf1c8"/><path d="M2.4 17Q3 23.4 4.2 25.2Q11.8 28.4 19.6 25.2Q20.8 23 21.4 17Q12 20 2.4 17Z" fill="#f0dfa0" opacity=".8"/><ellipse cx="12" cy="9.6" rx="9.6" ry="2.9" fill="#c8401a"/><ellipse cx="12" cy="9.9" rx="7.4" ry="1.8" fill="#e98a1e"/></svg>
<svg class="abs" style="left:411.5px;top:685px;" width="28" height="30" viewBox="0 0 28 30"><circle cx="12.9" cy="14.4" r="12.4" fill="#74b548"/><circle cx="12.9" cy="14.4" r="12" fill="none" stroke="#8cc860" stroke-width="1"/><path d="M12.9 6.6L15.5 10.6L12.9 14.8L10.3 10.6Z" fill="#55697a"/><circle cx="12.9" cy="10.4" r="1" fill="#8fa3b0"/><path d="M11.4 13.6L3.6 28.2M14.4 13.6L22.2 28.2" stroke="#f1f5f0" stroke-width="2.2" stroke-linecap="round"/><path d="M7.4 21.4Q12.9 25.6 18.4 21.4" stroke="#f1f5f0" stroke-width="1.8" fill="none"/></svg>
<div class="abs" style="left:465px;top:685.5px;width:30px;height:29.5px;background:#fbfdfd;"></div>
<div class="t" id="t78" style="left:466.60px;top:693.38px;font-size:14.5px;color:#74d6ce;-webkit-text-stroke:0;transform:scaleX(0.8533);">B4A</div>
<svg class="abs" style="left:525px;top:685px;" width="32" height="31" viewBox="0 0 32 31"><path d="M22.6 1L30.4 4.2V26.2L22.6 29.6L10.4 19.2L4.4 23.8L1 22V8.6L4.4 6.8L10.4 11.4Z" fill="#fbf9fd"/><path d="M22.6 3.6L28.2 5.8V24.8L22.6 27L11 15.3Z M3.2 9.8L4.6 9.2L11.6 15.3L4.6 21.4L3.2 20.8Z" fill="#6a2c91"/><path d="M22.6 10.6V20L16.2 15.3Z M4.6 12.4L7.8 15.3L4.6 18.2Z" fill="#fbf9fd"/></svg>
<svg class="abs" style="left:585px;top:684.5px;" width="28" height="31" viewBox="0 0 28 31"><path d="M13.8 0.8L26.6 8V22.8L13.8 30L1 22.8V8Z" fill="#242231" stroke="#15141d" stroke-width="1.2"/><text x="13.8" y="19.2" font-size="11.5" fill="#2eb7d6" text-anchor="middle" font-family="Liberation Sans, sans-serif" textLength="21" lengthAdjust="spacingAndGlyphs">nox</text></svg>
<svg class="abs" style="left:643.5px;top:687px;" width="27" height="27" viewBox="0 0 27 27"><circle cx="13.2" cy="13" r="12.8" fill="#f4325e"/><path d="M5 8.6H8.4L9.8 6.8H13.6L15 8.6H21.4V18.4H5Z" fill="#fdf2f5"/><circle cx="13.2" cy="13.4" r="3.5" fill="#f4325e"/><circle cx="13.2" cy="13.4" r="1.7" fill="#fdf2f5"/></svg>
<svg class="abs" style="left:700.5px;top:687.5px;" width="31" height="28" viewBox="0 0 31 28"><path d="M1 3.4H10.6L12.6 5.6H29.6V24H1Z" fill="#f3c95a"/><path d="M3 1.6H8.4V4H3Z" fill="#4aa84e"/><path d="M14 4H22V6.2H14Z" fill="#3aa3c8"/><path d="M9 2.2H12V4H9Z" fill="#d9572b"/><path d="M1 7.4H29.6V24.6H1Z" fill="#fbe08a"/><path d="M1 7.4H29.6V10H1Z" fill="#fdeeb0"/><path d="M5.4 16.6H25.2V27.6H19.4V22.2H11.2V27.6H5.4Z" fill="#4ea6e0"/><path d="M5.4 16.6H25.2V19.2H5.4Z" fill="#7cc4f0"/></svg>
<svg class="abs" style="left:758.5px;top:684.5px;" width="31" height="31" viewBox="0 0 31 31"><path d="M2 3H19.4L23.4 7V29H2Z" fill="#fafafa" stroke="#8a8a8a" stroke-width=".9"/><path d="M19.4 3V7H23.4Z" fill="#c8c8c8"/><path d="M3.6 5.4H17M3.6 7.6H17M3.6 9.8H20" stroke="#c9c9de" stroke-width=".8"/><defs><linearGradient id="npg" x1="0" y1="0" x2="0" y2="1"><stop offset="0" stop-color="#eaf5c8"/><stop offset=".55" stop-color="#9ed03c"/><stop offset="1" stop-color="#3c9a1e"/></linearGradient></defs><path d="M2.6 12H22.8V28.4H2.6Z" fill="url(#npg)"/><path d="M6.4 23V13.6Q6.4 11.8 8 11.8Q9.6 11.8 9.6 13.6V23" fill="none" stroke="#3a3a3a" stroke-width="1.5"/><path d="M11.4 17.4H15.2M13.3 15.5V19.3M16.2 17.4H20M18.1 15.5V19.3" stroke="#222" stroke-width="1.1"/><path d="M27.4 2.6L29.6 4.4L18.2 22L15.4 24L16 20.6Z" fill="#f0b429" stroke="#a8741a" stroke-width=".6"/><circle cx="28.8" cy="3" r="1.7" fill="#c8352b"/></svg>
<svg class="abs" style="left:816.5px;top:684.5px;" width="30" height="32" viewBox="0 0 30 32"><ellipse cx="11.6" cy="19" rx="9" ry="6.4" fill="#b7a08c" opacity=".85"/><ellipse cx="13.6" cy="11" rx="11" ry="8.2" fill="#f4eeee" stroke="#d6413c" stroke-width="2.2"/><path d="M7 5.4L21.4 22.6M20 5L10.6 19" stroke="#8b98a4" stroke-width="2.2" stroke-linecap="round"/><path d="M21 20.6Q27 22 26.4 27.6M19.8 22.4Q18.6 27.6 21.6 31M12.4 20.4Q9.6 25.6 12.4 30" stroke="#3b8fd0" stroke-width="2.4" fill="none" stroke-linecap="round"/></svg>
<svg class="abs" style="left:873px;top:688px;" width="32" height="25" viewBox="0 0 32 25"><path d="M5.2 1.2L17.4 4.2L13.8 17.4L1.6 14Z" fill="#9fd38a"/><path d="M10.4 4.4L23.4 5.6L21.6 19.8L8.6 18.4Z" fill="#a8cdea"/><path d="M15.6 7.6L27.6 3.6L31 16.8L19.4 23.2Z" fill="#f4d657"/><path d="M19.4 23.2L31 16.8L29.6 12Q25 17 18.6 19.6Z" fill="#e8c440" opacity=".7"/></svg>
<svg class="abs" style="left:973px;top:684.5px;" width="27" height="30" viewBox="0 0 27 30"><rect x="1" y="2.6" width="24" height="26" rx="1.6" fill="#1b1b20"/><rect x="1" y="2.6" width="24" height="4.2" rx="1.2" fill="#c9c9c9"/><rect x="1" y="6.2" width="24" height="2.2" fill="#8e1a22"/><rect x="5.6" y="1" width="5.6" height="2.6" rx="1" fill="#e2e2e2"/><rect x="14.6" y="1" width="5.6" height="2.6" rx="1" fill="#e2e2e2"/><circle cx="13" cy="18.4" r="6.9" fill="#101014" stroke="#d8d8d8" stroke-width="1.5"/><circle cx="13" cy="18.4" r="1.5" fill="#e4e4e4"/><path d="M13 18.4L16.6 15" stroke="#e4e4e4" stroke-width="1.1"/></svg>
<div class="abs" style="left:1010px;top:684.5px;width:45px;height:31.5px;background:#f0f0f1;"></div>
<div class="abs" style="left:1010px;top:685px;width:32.5px;height:22px;background:#eceeee;border:1px solid #d4d6d6;"></div>
<div class="t" id="t79" style="left:1013.60px;top:682.15px;font-size:8.8px;color:#55806a;font-weight:bold;transform:scaleX(0.9808);">D: 894</div>
<div class="t" id="t80" style="left:1013.60px;top:692.75px;font-size:8.8px;color:#b81e32;font-weight:bold;transform:scaleX(0.9808);">U: 248</div>
<svg class="abs" style="left:1010px;top:700px;" width="45" height="16" viewBox="0 0 45 16"><path d="M0 16V7H1.4L2.4 9V7H15.6V13H17.4V14.2H22V13.2H24.6V14.4H30V13.6H36V14.2H40V13H43V16Z" fill="#f58a0e"/><path d="M16 13.6H44" stroke="#8a3a1a" stroke-width=".9" opacity=".75"/><path d="M42.6 16V4.6H43.8V16Z" fill="#56606a"/></svg>
<svg class="abs" style="left:1064.5px;top:699.5px;" width="7" height="4" viewBox="0 0 7 4"><path d="M0 3.8H6.8L3.4 0Z" fill="#f8f8f8"/></svg>
<svg class="abs" style="left:1083px;top:693px;" width="17" height="17" viewBox="0 0 17 17"><circle cx="7.8" cy="8.4" r="7.6" fill="#1c7fd6"/><circle cx="7.8" cy="8.4" r="5.2" fill="#0e4fa0"/><path d="M10.6 6.4Q8 4.2 5.6 6.4Q4 8.6 5.6 10.8Q8 12.8 10.6 10.6" fill="none" stroke="#eaf4ff" stroke-width="1.7"/><circle cx="12.8" cy="2.8" r="2.1" fill="#f0502a"/></svg>
<svg class="abs" style="left:1105.5px;top:694px;" width="16" height="14" viewBox="0 0 16 14"><path d="M0.5 4.6H3.4L7.4 1V13L3.4 9.4H0.5Z" fill="#fbfbfb"/><path d="M9.4 4.4Q11 7 9.4 9.6M11.6 2.6Q14.4 7 11.6 11.4" fill="none" stroke="#fbfbfb" stroke-width="1.1"/></svg>
<svg class="abs" style="left:1134px;top:693.5px;" width="9" height="15" viewBox="0 0 9 15"><rect x="2.6" y="0.4" width="3.2" height="1.6" fill="#fbfbfb"/><rect x="0.7" y="2" width="7" height="12.2" fill="none" stroke="#fbfbfb" stroke-width="1.3"/><rect x="2.2" y="7" width="4" height="5.8" fill="#fbfbfb"/></svg>
<svg class="abs" style="left:1151px;top:693.5px;" width="16" height="15" viewBox="0 0 16 15"><rect x="4.2" y="2.6" width="10.4" height="7.6" fill="none" stroke="#fbfbfb" stroke-width="1.2"/><path d="M9.4 10.2V12.6M6.4 13H12.6" stroke="#fbfbfb" stroke-width="1.2"/><circle cx="2.6" cy="2.6" r="1.9" fill="none" stroke="#fbfbfb" stroke-width="1"/><path d="M2.6 4.6V12.4" stroke="#fbfbfb" stroke-width="1.6"/></svg>
<div class="t" id="t81" style="left:1186.00px;top:686.38px;font-size:9px;color:#f4f4f4;direction:rtl;font-family:Liberation Sans,DejaVu Sans,sans-serif;transform:scaleX(1.0643);">فا</div>
<div class="t" id="t82" style="left:1184.00px;top:701.49px;font-size:11px;color:#f6f6f6;transform:scaleX(0.8920);">FA</div>
<div class="t" id="t83" style="left:1219.00px;top:685.72px;font-size:11.5px;color:#f6f6f6;transform:scaleX(0.9407);">9:33 AM</div>
<div class="t" id="t84" style="left:1213.00px;top:701.32px;font-size:11.5px;color:#f6f6f6;transform:scaleX(0.9523);">11/13/2017</div>
</div></body></html>
